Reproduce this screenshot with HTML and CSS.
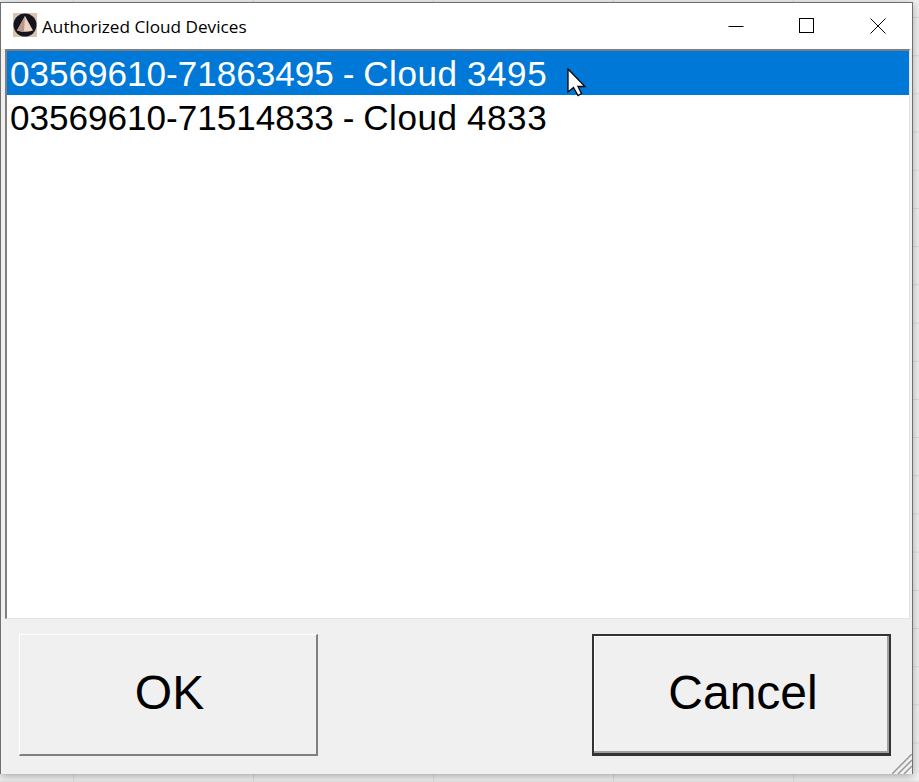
FILE: index.html
```html
<!DOCTYPE html>
<html lang="en">
<head>
  <meta charset="UTF-8">
  <meta name="viewport" content="width=device-width, initial-scale=1.0">
  <title>Authorized Cloud Devices</title>
  <link rel="stylesheet" href="styles.css">
</head>
<body>
  <div class="window">
    <div class="titlebar">
      <svg class="app-icon" width="24" height="24" viewBox="0 0 24 24">
        <rect width="24" height="24" fill="#d8c4b0"/>
        <circle cx="12" cy="12" r="11.5" fill="#15131c"/>
        <path d="M12 3 L20 17.5 Q12 20 4 17.5 Z" fill="#efd2c2"/>
        <path d="M12 3 L11 18.8 Q7 18.6 4 17.5 Z" fill="#b8988c"/>
      </svg>
      <span class="title">Authorized Cloud Devices</span>
      <div class="controls">
        <svg width="16" height="16" viewBox="0 0 16 16"><path d="M0.5 8.5 H15.5" stroke="#000" fill="none"/></svg>
        <svg width="16" height="16" viewBox="0 0 16 16"><rect x="0.5" y="0.5" width="14" height="14" stroke="#000" fill="none"/></svg>
        <svg width="16" height="16" viewBox="0 0 16 16"><path d="M0.5 0.5 L15.5 15.5 M15.5 0.5 L0.5 15.5" stroke="#000" fill="none"/></svg>
      </div>
    </div>

    <div class="listbox">
      <div class="item selected">03569610-71863495 - <span class="name">Cloud 3495</span></div>
      <div class="item">03569610-71514833 - <span class="name">Cloud 4833</span></div>
    </div>

    <div class="buttons">
      <button class="btn">OK</button>
      <button class="btn default">Cancel</button>
    </div>

    <!-- agarre de la esquina -->
    <svg class="grip" width="20" height="20" viewBox="0 0 20 20">
      <path d="M0 20 L20 0 M6 20 L20 6 M12 20 L20 12" stroke="#9a9a9a" stroke-width="1.5" fill="none"/>
    </svg>

    <svg class="cursor" width="20" height="29" viewBox="0 0 20 29">
      <path d="M1 1 L1 24 L6.5 19.5 L11 27.5 L14.5 25.5 L11 18.5 L18 18.5 Z" fill="#fff" stroke="#000" stroke-width="1.3"/>
    </svg>
  </div>
</body>
</html>
```

FILE: styles.css
```css
html, body { height: 100%; }

body {
  margin: 0;
  overflow: hidden;
  background-color: #f1f1f1;
  background-image:
    linear-gradient(to right, #dcdcdc 1px, transparent 1px),
    linear-gradient(to bottom, #dcdcdc 1px, transparent 1px);
  background-size: 180px 38.2px;
  background-position: 73px 17px;
  font-family: "Liberation Sans", Arial, sans-serif;
}

.window {
  position: relative;
  box-sizing: border-box;
  width: 913px;
  height: 772px;
  margin: 2px 0 0 0;
  background-color: #f0f0f0;
  border: 1px solid #6f6f6f;
  border-bottom: none;
  box-shadow: 0 2px 9px rgba(0, 0, 0, 0.32);
}

.titlebar {
  display: flex;
  align-items: center;
  height: 46px;
  padding-left: 12px;
  background-color: #fff;
}

.app-icon { margin-right: 5px; margin-top: -3px; }

.title {
  font-family: "Open Sans", sans-serif;
  font-size: 17.2px;
  color: #000;
}

.controls {
  display: flex;
  align-items: center;
  gap: 55px;
  margin-top: -1px;
  margin-left: auto;
  margin-right: 26px;
}

.listbox {
  box-sizing: border-box;
  height: 570px;
  margin: 0 2px 0 4px;
  background-color: #fff;
  border-top: 2px solid #7f7f7f;
  border-left: 2px solid #7f7f7f;
  border-right: 1px solid #e3e3e3;
  border-bottom: 1px solid #e3e3e3;
}

.item {
  height: 44px;
  line-height: 46px;
  padding-left: 3px;
  font-size: 35.1px;
  word-spacing: -0.9px;
  white-space: nowrap;
  color: #000;
}

.item .name { letter-spacing: 0.55px; }

.item.selected {
  background-color: #0078d7;
  color: #fff;
}

.buttons {
  display: flex;
  justify-content: space-between;
  padding: 15px 21px 0 18px;
}

.btn {
  box-sizing: border-box;
  width: 299px;
  height: 122px;
  padding: 0 0 4px 3px;
  background-color: #f0f0f0;
  font-family: inherit;
  font-size: 48px;
  color: #000;
  border: none;
  border-top: 1px solid #fff;
  border-left: 1px solid #fff;
  border-right: 2px solid #808080;
  border-bottom: 2px solid #808080;
}

.btn.default {
  border-top: 2px solid #333;
  border-left: 2px solid #333;
  border-right: 2px solid #333;
  border-bottom: 3px solid #333;
  box-shadow: inset -2px -2px 0 #a0a0a0, inset 1px 1px 0 #fff;
}

.grip {
  position: absolute;
  right: 0;
  bottom: 0;
}

.cursor {
  position: absolute;
  left: 566px;
  top: 65px;
}
```
